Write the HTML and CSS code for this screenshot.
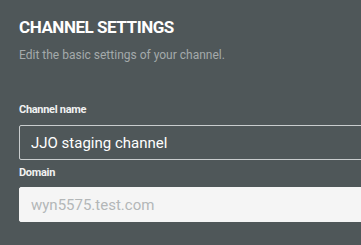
FILE: index.html
```html
<!DOCTYPE html>
<html lang="en">
<head>
    <meta charset="UTF-8">
    <meta name="viewport" content="width=device-width, initial-scale=1.0">
    <title>Channel settings</title>
    <link rel="stylesheet" href="styles.css">
</head>
<body>

    <!-- Réglages de base de la chaîne -->
    <div class="settings">
        <h1 class="settings-title">Channel settings</h1>
        <p class="settings-desc">Edit the basic settings of your channel.</p>

        <div class="field field-name">
            <label for="channel-name">Channel name</label>
            <input type="text" id="channel-name" value="JJO staging channel">
        </div>

        <div class="field field-domain">
            <label for="channel-domain">Domain</label>
            <input type="text" id="channel-domain" class="input-locked" placeholder="wyn5575.test.com" readonly>
        </div>
    </div>

</body>
</html>
```

FILE: styles.css
```css
html, body {
    margin: 0;
    overflow: hidden;
}

body {
    font-family: Roboto, "Liberation Sans", sans-serif;
    background-color: #4f5759;
    color: #fff;
}

.settings {
    padding: 17px 0 0 19px;
}

.settings-title {
    margin: 0;
    font-size: 17px;
    line-height: 20px;
    font-weight: 700;
    text-transform: uppercase;
    letter-spacing: -0.45px;
}

.settings-desc {
    margin: 11px 0 0;
    font-size: 12px;
    line-height: 14px;
    color: #a4aaab;
}

.field label {
    display: block;
    font-size: 11px;
    line-height: 14px;
    font-weight: 700;
    letter-spacing: -0.3px;
    color: #f2f2f2;
    margin-bottom: 8px;
}

.field-name {
    margin-top: 41px;
}

.field-domain {
    margin-top: 6px;
}

.field-domain label {
    margin-bottom: 7px;
}

.field input {
    display: block;
    box-sizing: border-box;
    width: 420px;
    height: 35px;
    margin: 0;
    padding: 0 11px;
    font-family: Roboto, "Liberation Sans", sans-serif;
    font-size: 15px;
    color: #fff;
    background: transparent;
    border: 1px solid #c9cdce;
    border-radius: 2px;
    outline: none;
}

.field input.input-locked {
    background-color: #f5f5f5;
    border-color: #f5f5f5;
}

.input-locked::placeholder {
    color: #b3b7b8;
    opacity: 1;
}
```
